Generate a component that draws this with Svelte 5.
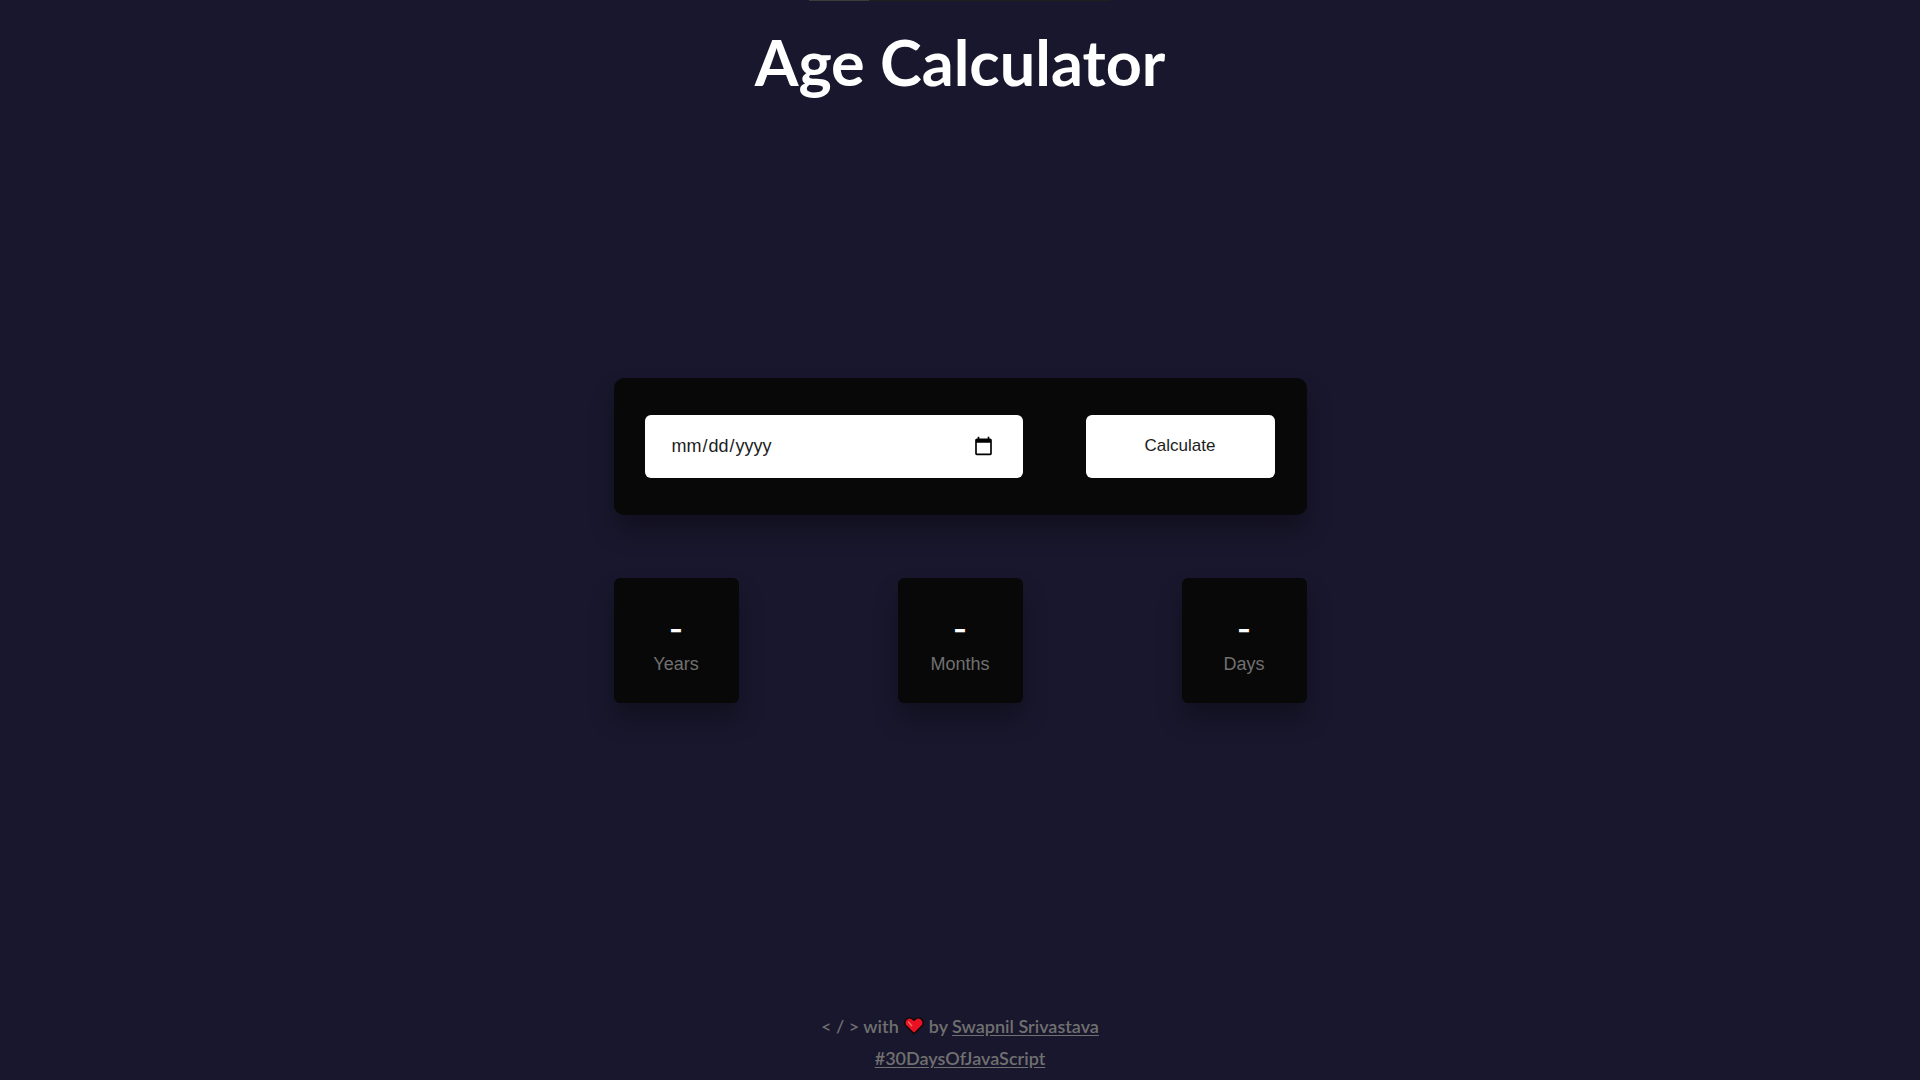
<script lang="ts">
  type Age = { years: number; months: number; days: number };

  let birth = $state("");
  let age = $state<Age | null>(null);

  const TILES: { key: keyof Age; text: string }[] = [
    { key: "years", text: "Years" },
    { key: "months", text: "Months" },
    { key: "days", text: "Days" },
  ];

  function calculate(e: SubmitEvent): void {
    e.preventDefault();
    if (!birth) return;
    const [y, m, d] = birth.split("-").map(Number);
    const now = new Date();
    let years = now.getFullYear() - y;
    let months = now.getMonth() + 1 - m;
    let days = now.getDate() - d;
    if (days < 0) {
      months--;
      days += new Date(now.getFullYear(), now.getMonth(), 0).getDate();
    }
    if (months < 0) {
      years--;
      months += 12;
    }
    age = years < 0 ? null : { years, months, days };
  }
</script>

<div class="page">
  <header>
    <div class="strip"><span></span></div>
    <h1>Age Calculator</h1>
  </header>

  <main>
    <form class="card" onsubmit={calculate}>
      <input type="date" aria-label="Date of birth" bind:value={birth} />
      <button type="submit">Calculate</button>
    </form>
    <div class="tiles">
      {#each TILES as t}
        <div class="tile">
          <strong>{age ? age[t.key] : "-"}</strong>
          <span>{t.text}</span>
        </div>
      {/each}
    </div>
  </main>

  <footer>
    <p>
      <span>&lt; / &gt; with</span>
      <svg viewBox="0 0 20 18" width="20" height="18" aria-hidden="true">
        <path d="M10 16.8 L1.6 8.6 C0.4 7 0.6 3.8 2.4 2.2 C4.2 0.7 7.2 0.7 8.9 2.2 L10 3.2 L11.1 2.2 C12.8 0.7 15.8 0.7 17.6 2.2 C19.4 3.8 19.6 7 18.4 8.6 Z" fill="#e81224" stroke="#080808" stroke-width="1.4" stroke-linejoin="round" />
        <path d="M4.4 5 L7.6 8.6" stroke="#f4665f" stroke-width="1.6" stroke-linecap="round" />
      </svg>
      <span>by <a href="#author">Swapnil Srivastava</a></span>
    </p>
    <p><a href="#30DaysOfJavaScript">#30DaysOfJavaScript</a></p>
  </footer>
</div>

<style>
  :global(body) { margin: 0; background: #19172d; }
  .page { box-sizing: border-box; min-height: 100vh; display: grid; grid-template-rows: 1fr auto 1fr; justify-items: center; font-family: "Liberation Sans", Arial, sans-serif; }

  header { display: flex; flex-direction: column; align-items: center; gap: 23px; }
  .strip { display: flex; width: 301px; height: 1px; background: #1f1f1f; }
  .strip span { width: 60px; background: #3c3c3c; }
  h1 { margin: 0; color: #fff; font-family: Lato, sans-serif; font-size: 63px; font-weight: 700; line-height: 76px; }

  main { width: 693px; max-width: 100%; display: flex; flex-direction: column; gap: 63px; }
  .card { box-sizing: border-box; display: grid; grid-template-columns: 2fr 1fr; gap: 63px; padding: 37px 32px 37px 31px; background: #080808; border-radius: 10px; box-shadow: 0 16px 24px rgba(0, 0, 0, 0.3); }
  input, button { box-sizing: border-box; height: 63px; border: 0; border-radius: 6px; background: #fff; color: #1c1c1c; font-family: inherit; }
  input { min-width: 0; padding: 0 27px 0 26px; font-size: 18px; }
  input::-webkit-calendar-picker-indicator { width: 21px; height: 21px; }
  button { padding: 0 8px; font-size: 17px; cursor: pointer; }

  .tiles { display: flex; justify-content: space-between; }
  .tile { box-sizing: border-box; width: 125px; height: 125px; padding-top: 31px; display: flex; flex-direction: column; align-items: center; background: #080808; border-radius: 6px; box-shadow: 0 16px 24px rgba(0, 0, 0, 0.3); }
  .tile strong { color: #fff; font-family: Inter, sans-serif; font-size: 30px; font-weight: 600; line-height: 40px; }
  .tile span { color: #707070; font-size: 18px; line-height: 30px; }

  footer { align-self: end; padding-bottom: 6px; color: #707070; font-family: Lato, sans-serif; font-size: 18px; font-weight: 600; line-height: 32px; }
  footer p { margin: 0; display: flex; justify-content: center; align-items: center; gap: 5px; }
  a { color: inherit; text-underline-offset: 2px; }
</style>
